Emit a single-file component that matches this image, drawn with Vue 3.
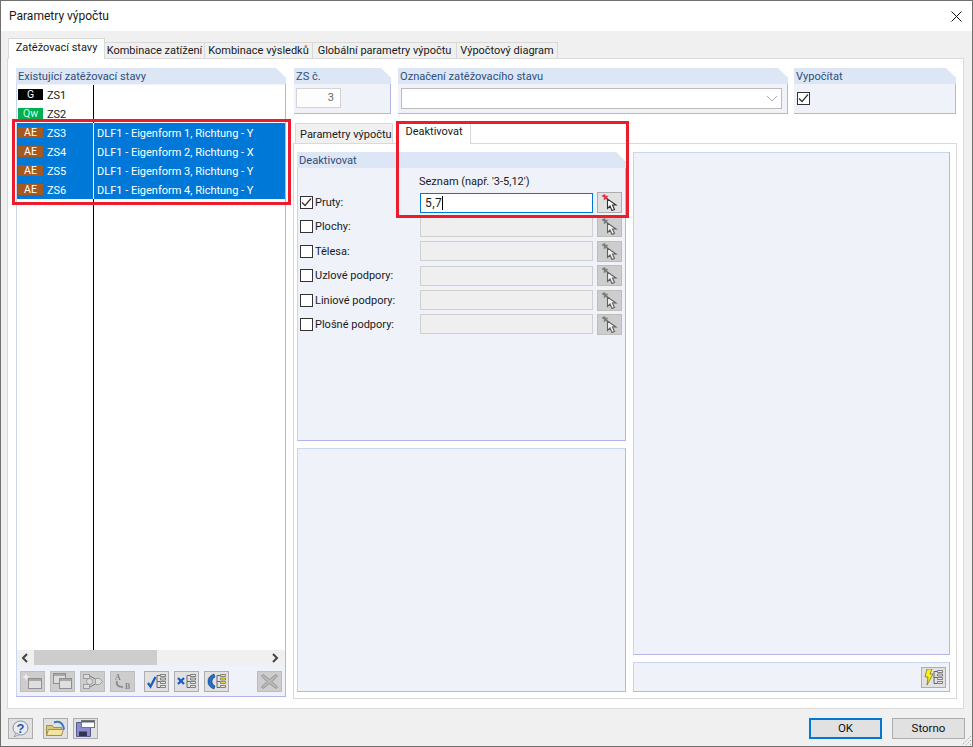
<template>
  <div class="window">
    <!-- sdílené ikony -->
    <svg class="defs" width="0" height="0">
      <symbol id="i-pick" viewBox="0 0 21 17">
        <path d="M5.500 0l1.500 2L9.500 1.500 8 3.500l1 2.500-2.500-1L4.500 6.500 5 3.500 2.500 2z" fill="#e0364a" />
        <path d="M8.500 5v9.500l2.500-2.500 2 4.500 2.500-1-2-4.500h3.500z" fill="#fff" stroke="#333" stroke-width="1.100" />
      </symbol>
      <symbol id="i-new" viewBox="0 0 21 17">
        <rect x="6.500" y="5.500" width="13" height="10" fill="#e8e8dc" stroke="#777" />
        <rect x="7" y="6" width="12" height="2" fill="#999" />
        <path d="M4 0l1 3 3 1-3 1-1 3-1-3-3-1 3-1z" fill="#fff" />
      </symbol>
      <symbol id="i-copy" viewBox="0 0 21 17">
        <rect x="1.500" y=".5" width="12" height="10" fill="#e4e4e4" stroke="#777" />
        <rect x="2" y="1" width="11" height="2" fill="#999" />
        <rect x="7.500" y="5.500" width="12" height="10" fill="#e8e8dc" stroke="#777" />
        <rect x="8" y="6" width="11" height="2" fill="#999" />
      </symbol>
      <symbol id="i-flow" viewBox="0 0 21 17">
        <rect x="1.500" y="1.500" width="6" height="4" fill="#e4e4e4" stroke="#888" />
        <rect x="1.500" y="11.500" width="6" height="4" fill="#e4e4e4" stroke="#888" />
        <circle cx="7.500" cy="8.500" r="3" fill="#e4e4e4" stroke="#888" />
        <path d="M13.500 5.500h4l3 3-3 3h-4z" fill="#e4e4e4" stroke="#888" />
        <path d="M8 3l5 3M8 14l5-3" stroke="#555" fill="none" />
      </symbol>
      <symbol id="i-check" viewBox="0 0 21 17">
        <path d="M2 10l2.500 3.500L9.500 4" stroke="#1d5fc4" stroke-width="2.400" fill="none" />
        <path d="M11 2.500v12M11 2.500h3M11 8.500h3M11 14.500h3" stroke="#666" fill="none" />
        <path d="M14.500 1.500h5v2h-5zM14.500 5h5v2h-5zM14.500 8.500h5v2h-5zM14.500 12.500h5v2h-5z" fill="#e8e8e8" stroke="#666" stroke-width=".8" />
      </symbol>
      <symbol id="i-cross" viewBox="0 0 21 17">
        <path d="M2 5l6 6M8 5l-6 6" stroke="#1d5fc4" stroke-width="2.400" fill="none" />
        <path d="M11 2.500v12M11 2.500h3M11 8.500h3M11 14.500h3" stroke="#666" fill="none" />
        <path d="M14.500 1.500h5v2h-5zM14.500 5h5v2h-5zM14.500 8.500h5v2h-5zM14.500 12.500h5v2h-5z" fill="#e8e8e8" stroke="#666" stroke-width=".8" />
      </symbol>
      <symbol id="i-swap" viewBox="0 0 21 17">
        <path d="M8 1C3 3 2 6 2 8.500s1 5.500 6 7.500l1-3C7 12 6 10 6 8.500S7 5 9 4z" fill="#1f6fd0" stroke="#124" stroke-width=".5" />
        <path d="M11 2.500v12M11 2.500h3M11 8.500h3M11 14.500h3" stroke="#666" fill="none" />
        <path d="M14.500 1.500h5v2h-5zM14.500 5h5v2h-5zM14.500 8.500h5v2h-5z" fill="#f5e52a" stroke="#777" stroke-width=".8" />
        <path d="M14.500 12.500h5v2h-5z" fill="#e8e8e8" stroke="#666" stroke-width=".8" />
      </symbol>
      <symbol id="i-del" viewBox="0 0 21 17">
        <path d="M4 1.500l6.500 5 6.500-5 1.500 1.500-5.500 5.500 5.500 5.500-1.500 1.500-6.500-5-6.500 5-1.500-1.500 5.500-5.500-5.500-5.500z" fill="#b4b4b4" stroke="#777" />
      </symbol>
      <symbol id="i-bolt" viewBox="0 0 21 17">
        <path d="M4 0h5L7 5h3l-6 11 1-8H2z" fill="#f6ee1e" stroke="#6a6a20" stroke-width=".7" />
        <path d="M11 2.500v12M11 2.500h3M11 8.500h3M11 14.500h3" stroke="#666" fill="none" />
        <path d="M14.500 1.500h5v2h-5zM14.500 5h5v2h-5zM14.500 8.500h5v2h-5zM14.500 12.500h5v2h-5z" fill="#e8e8e8" stroke="#666" stroke-width=".8" />
      </symbol>
      <symbol id="i-open" viewBox="0 0 21 17">
        <path d="M1.500 5.500h6l1 2h8v8h-15z" fill="#d8c87c" stroke="#a0924c" />
        <path d="M1.500 15.500l2-6h15l-2 6z" fill="#f0e4a0" stroke="#a0924c" />
        <path d="M9 2.500c5-2 9 0 10 7" stroke="#3f78c0" stroke-width="2" fill="none" />
      </symbol>
      <symbol id="i-save" viewBox="0 0 21 17">
        <path d="M1.500 2.500h14v14h-14z" fill="#8c8cd4" stroke="#555a88" />
        <rect x="4" y="11.500" width="8" height="4.500" fill="#33334e" />
        <rect x="6.500" y=".5" width="13" height="7" fill="#fff" stroke="#777" />
        <rect x="7" y="1" width="12" height="1.500" fill="#4a628c" />
      </symbol>
    </svg>

    <header class="titlebar">
      <span class="title">Parametry výpočtu</span>
      <svg class="close" width="11" height="11" viewBox="0 0 11 11">
        <path d="M.5.500l10 10M10.500.500l-10 10" stroke="#111" fill="none" />
      </svg>
    </header>

    <div class="body">
      <nav class="tabs">
        <div v-for="(t, i) in mainTabs" :key="t.label" class="tab" :class="{ active: i === 0 }" :style="{ width: t.width + 'px' }">{{ t.label }}</div>
      </nav>

      <section class="panel">
        <!-- levý sloupec -->
        <div class="left group">
          <div class="group-head">Existující zatěžovací stavy</div>
          <div class="list">
            <div v-for="r in rows" :key="r.name" class="row" :class="{ sel: r.desc }">
              <div class="c1">
                <span class="badge" :class="r.kind">{{ r.code }}</span>
                <span class="name">{{ r.name }}</span>
              </div>
              <div class="c2">{{ r.desc }}</div>
            </div>
            <div class="row fill"><div class="c1"></div></div>
          </div>
          <div class="scrollbar">
            <svg width="8" height="10" viewBox="0 0 8 10"><path d="M6 1L2 5l4 4" stroke="#444" stroke-width="2" fill="none" /></svg>
            <div class="track"><div class="thumb"></div></div>
            <svg width="8" height="10" viewBox="0 0 8 10"><path d="M2 1l4 4-4 4" stroke="#444" stroke-width="2" fill="none" /></svg>
          </div>
          <div class="toolbar">
            <div class="tool-set">
              <button v-for="n in ['new', 'copy', 'flow']" :key="n" class="ibtn off"><svg><use :href="'#i-' + n" /></svg></button>
              <button class="ibtn off">
                <svg viewBox="0 0 21 17">
                  <text x="3" y="7" class="ab-text">A</text>
                  <text x="13" y="16" class="ab-text">B</text>
                  <path d="M5 8c-1 4 1 6 6 6" stroke="#777" stroke-width="2" fill="none" />
                </svg>
              </button>
            </div>
            <div class="tool-set">
              <button v-for="n in ['check', 'cross', 'swap']" :key="n" class="ibtn"><svg><use :href="'#i-' + n" /></svg></button>
            </div>
            <button class="ibtn off last"><svg><use href="#i-del" /></svg></button>
          </div>
        </div>

        <!-- pravý sloupec -->
        <div class="right">
          <div class="top-row">
            <div class="group g-no">
              <div class="group-head">ZS č.</div>
              <div class="group-body"><div class="no-input">3</div></div>
            </div>
            <div class="group g-name">
              <div class="group-head">Označení zatěžovacího stavu</div>
              <div class="group-body">
                <div class="combo">
                  <svg width="12" height="7" viewBox="0 0 12 7"><path d="M1 1l5 5 5-5" stroke="#a8a8a8" fill="none" /></svg>
                </div>
              </div>
            </div>
            <div class="group g-calc">
              <div class="group-head">Vypočítat</div>
              <div class="group-body calc-body">
                <span class="cb checked"><svg width="11" height="11" viewBox="0 0 11 11"><path d="M1 5.500l3 3 6-7" stroke="#333" stroke-width="1.200" fill="none" /></svg></span>
              </div>
            </div>
          </div>

          <nav class="subtabs">
            <div class="subtab">Parametry výpočtu</div>
            <div class="subtab active">Deaktivovat</div>
          </nav>

          <div class="subpanel">
            <div class="sub-col col-a">
              <div class="group deact">
                <div class="group-head">Deaktivovat</div>
                <div class="list-hint">Seznam (např. '3-5,12')</div>
                <div class="form">
                  <div v-for="(f, i) in fields" :key="f" class="form-row">
                    <span class="cb" :class="{ checked: i === 0 }">
                      <svg v-if="i === 0" width="11" height="11" viewBox="0 0 11 11"><path d="M1 5.500l3 3 6-7" stroke="#333" stroke-width="1.200" fill="none" /></svg>
                    </span>
                    <label class="f-label">{{ f }}</label>
                    <div class="f-input" :class="{ focus: i === 0 }">
                      <template v-if="i === 0">5,7<span class="caret"></span></template>
                    </div>
                    <button class="ibtn pick" :class="{ off: i !== 0 }"><svg><use href="#i-pick" /></svg></button>
                  </div>
                </div>
              </div>
              <div class="box grow"></div>
            </div>
            <div class="sub-col col-b">
              <div class="box grow"></div>
              <div class="box strip">
                <button class="ibtn"><svg><use href="#i-bolt" /></svg></button>
              </div>
            </div>
          </div>
        </div>
      </section>

      <footer class="footer">
        <div class="foot-icons">
          <button class="ibtn help">
            <svg viewBox="0 0 21 17">
              <ellipse cx="10.500" cy="8" rx="7.500" ry="7" fill="#e8ecf2" stroke="#8a919c" />
              <path d="M6 13l-2 4 5-2.500z" fill="#e8ecf2" stroke="#8a919c" stroke-width=".8" />
              <text x="10.500" y="12.500" text-anchor="middle" class="help-text">?</text>
            </svg>
          </button>
          <button class="ibtn"><svg><use href="#i-open" /></svg></button>
          <button class="ibtn"><svg><use href="#i-save" /></svg></button>
        </div>
        <div class="foot-btns">
          <button class="btn primary">OK</button>
          <button class="btn">Storno</button>
        </div>
      </footer>
    </div>

    <svg class="grip" width="12" height="12" viewBox="0 0 12 12">
      <path d="M11 2L2 11M11 6l-5 5M11 10l-1 1" stroke="#a8a8a8" stroke-dasharray="1.500 1" fill="none" />
    </svg>

    <!-- červené zvýraznění přes obsah -->
    <div class="mark mark-a"></div>
    <div class="mark mark-b"></div>
  </div>
</template>

<script setup>
const mainTabs = [
  { label: 'Zatěžovací stavy', width: 97 },
  { label: 'Kombinace zatížení', width: 100 },
  { label: 'Kombinace výsledků', width: 108 },
  { label: 'Globální parametry výpočtu', width: 144 },
  { label: 'Výpočtový diagram', width: 101 },
]

const rows = [
  { code: 'G', kind: 'k-g', name: 'ZS1', desc: '' },
  { code: 'Qw', kind: 'k-q', name: 'ZS2', desc: '' },
  { code: 'AE', kind: 'k-a', name: 'ZS3', desc: 'DLF1 - Eigenform 1, Richtung - Y' },
  { code: 'AE', kind: 'k-a', name: 'ZS4', desc: 'DLF1 - Eigenform 2, Richtung - X' },
  { code: 'AE', kind: 'k-a', name: 'ZS5', desc: 'DLF1 - Eigenform 3, Richtung - Y' },
  { code: 'AE', kind: 'k-a', name: 'ZS6', desc: 'DLF1 - Eigenform 4, Richtung - Y' },
]

const fields = ['Pruty:', 'Plochy:', 'Tělesa:', 'Uzlové podpory:', 'Liniové podpory:', 'Plošné podpory:']
</script>

<style scoped>
.window {
  position: relative;
  width: 973px;
  height: 747px;
  box-sizing: border-box;
  border: 1px solid #707070;
  background: #f0f0f0;
  font-family: Roboto, "Noto Sans", sans-serif;
  font-size: 11px;
  color: #1a1a1a;
  overflow: hidden;
}

.defs {
  display: block;
  height: 0;
}

.ab-text {
  font-family: "Liberation Serif", serif;
  font-size: 8px;
  font-weight: 700;
  fill: #666;
}

.help-text {
  font-family: "Liberation Sans", sans-serif;
  font-size: 13px;
  font-weight: 700;
  fill: #2c5aa8;
}

.titlebar {
  height: 30px;
  background: #fff;
  display: flex;
  align-items: center;
  justify-content: space-between;
  padding: 0 10px 0 8px;
}

.title {
  font-size: 12px;
}

.body {
  padding: 7px 8px 0 6px;
}

.tabs {
  display: flex;
  align-items: flex-end;
  height: 21px;
  margin-left: 1px;
  position: relative;
  z-index: 1;
}

.tab {
  height: 16px;
  box-sizing: border-box;
  border: 1px solid #d9d9d9;
  border-left: 0;
  border-bottom: 0;
  background: #f0f0f0;
  text-align: center;
  line-height: 15px;
  white-space: nowrap;
  margin-bottom: 1px;
}

.tab.active {
  height: 21px;
  background: #fff;
  border-left: 1px solid #d9d9d9;
  line-height: 17px;
  margin-bottom: 0;
}

.panel {
  height: 651px;
  margin-top: -1px;
  box-sizing: border-box;
  border: 1px solid #d9d9d9;
  background: #fff;
  padding: 9px 7px 11px 8px;
  display: flex;
  gap: 8px;
}

.group {
  background: #eff3f9;
  box-sizing: border-box;
  border-right: 1px solid #b4b4e6;
  border-bottom: 1px solid #b4b4e6;
  clip-path: polygon(0 0, calc(100% - 10px) 0, 100% 10px, 100% 100%, 0 100%);
}

.group-head {
  height: 16px;
  margin-right: -1px;
  background: #dce6f4;
  color: #2f4f7c;
  font-size: 11.100px;
  line-height: 17px;
  padding-left: 2px;
  white-space: nowrap;
}

.left {
  width: 270px;
  display: flex;
  flex-direction: column;
  border-left: 1px solid #c9d6ec;
}

.left .group-head {
  margin-left: -1px;
  padding-left: 2px;
}

.list {
  flex: 1;
  margin-top: 1px;
  background: #fff;
  display: flex;
  flex-direction: column;
  min-height: 0;
}

.row {
  display: flex;
  height: 19px;
  line-height: 19px;
  flex: none;
}

.row.fill {
  flex: 1;
}

.c1 {
  width: 77px;
  flex: none;
  box-sizing: border-box;
  border-right: 1px solid #000;
  display: flex;
  align-items: center;
  gap: 4px;
  padding-left: 1px;
}

.name {
  padding-top: 2px;
}

.c2 {
  padding: 1px 0 0 3px;
  white-space: nowrap;
}

.row.sel {
  background: #0078d7;
  color: #fff;
}

.row.sel .c1 {
  border-right-color: #fff;
}

.badge {
  width: 25px;
  height: 11px;
  line-height: 11px;
  text-align: center;
  font-size: 10.500px;
  flex: none;
}

.k-g {
  background: #000;
  color: #fff;
}

.k-q {
  background: #00b050;
  color: #cfe;
}

.k-a {
  background: #a5581f;
  color: #fff;
}

.scrollbar {
  height: 16px;
  background: #f0f0f0;
  display: flex;
  align-items: center;
  padding: 0 6px 0 4px;
  gap: 4px;
  flex: none;
}

.track {
  flex: 1;
  height: 16px;
}

.thumb {
  width: 123px;
  height: 15px;
  margin-left: 1px;
  background: #cdcdcd;
}

.toolbar {
  height: 29px;
  margin-top: 1px;
  flex: none;
  display: flex;
  align-items: center;
  gap: 9px;
  padding-left: 3px;
}

.tool-set {
  display: flex;
  gap: 5px;
}

.ibtn {
  width: 25px;
  height: 21px;
  padding: 0;
  box-sizing: border-box;
  border: 1px solid #adadad;
  background: #e1e1e1;
  display: flex;
  align-items: center;
  justify-content: center;
  flex: none;
}

.ibtn svg {
  width: 21px;
  height: 17px;
}

.ibtn.off {
  background: #cdcdcd;
  border-color: #bdbdbd;
}

.ibtn.off svg {
  filter: grayscale(1);
  opacity: 0.7;
}

.last {
  margin-left: 19px;
}

.right {
  width: 662px;
  flex: none;
  display: flex;
  flex-direction: column;
}

.top-row {
  display: flex;
  height: 46px;
  gap: 7px;
  flex: none;
}

.g-no {
  width: 97px;
}

.g-name {
  width: 390px;
  margin-right: -1px;
}

.g-calc {
  width: 162px;
}

.group-body {
  padding: 4px 5px 0 2px;
}

.no-input {
  width: 45px;
  height: 20px;
  box-sizing: border-box;
  border: 1px solid #d4d4d4;
  background: #fdfdfd;
  color: #666;
  text-align: right;
  padding-right: 6px;
  line-height: 18px;
}

.combo {
  height: 21px;
  margin-left: 1px;
  box-sizing: border-box;
  border: 1px solid #bcbcbc;
  background: #fff;
  display: flex;
  align-items: center;
  justify-content: flex-end;
  padding-right: 3px;
}

.calc-body {
  padding-left: 3px;
  padding-top: 8px;
}

.cb {
  width: 13px;
  height: 13px;
  box-sizing: border-box;
  border: 1px solid #333;
  background: #fff;
  display: flex;
  align-items: center;
  justify-content: center;
  flex: none;
}

.subtabs {
  display: flex;
  align-items: flex-end;
  height: 22px;
  margin-top: 8px;
  margin-left: 1px;
  position: relative;
  z-index: 1;
  flex: none;
}

.subtab {
  width: 98px;
  height: 20px;
  box-sizing: border-box;
  border: 1px solid #d9d9d9;
  border-bottom: 0;
  background: #f0f0f0;
  padding-left: 4px;
  line-height: 21px;
  white-space: nowrap;
  margin-bottom: 1px;
}

.subtab.active {
  width: 74px;
  height: 22px;
  margin-left: 4px;
  margin-bottom: 0;
  padding-left: 0;
  text-align: center;
  background: #fff;
  line-height: 18px;
}

.subpanel {
  width: 664px;
  height: 556px;
  flex: none;
  margin: -1px 0 0 -1px;
  box-sizing: border-box;
  border: 1px solid #d9d9d9;
  padding: 8px 6px 6px 3px;
  display: flex;
  gap: 7px;
}

.sub-col {
  display: flex;
  flex-direction: column;
  gap: 7px;
}

.col-a {
  width: 329px;
}

.col-b {
  flex: 1;
}

.box {
  background: #eff3f9;
  box-sizing: border-box;
  border: 1px solid #c9d6ec;
  border-right-color: #b4b4e6;
  border-bottom-color: #b4b4e6;
}

.grow {
  flex: 1;
}

.strip {
  height: 30px;
  flex: none;
  display: flex;
  align-items: center;
  justify-content: flex-end;
  padding-right: 3px;
}

.deact {
  height: 289px;
  flex: none;
  border-left: 1px solid #c9d6ec;
}

.deact .group-head {
  margin-left: -1px;
}

.list-hint {
  height: 24px;
  padding-left: 121px;
  line-height: 27px;
  white-space: nowrap;
}

.form {
  display: flex;
  flex-direction: column;
  gap: 3.400px;
}

.form-row {
  display: flex;
  align-items: center;
  height: 21px;
  padding-left: 2px;
}

.f-label {
  width: 105px;
  margin-left: 2px;
  white-space: nowrap;
}

.f-input {
  width: 173px;
  height: 20px;
  box-sizing: border-box;
  border: 1px solid #cfcfcf;
  background: #efefef;
  display: flex;
  align-items: center;
  padding-left: 4px;
  font-size: 12px;
  letter-spacing: 0.5px;
}

.f-input.focus {
  border-color: #0078d7;
  background: #fff;
}

.caret {
  width: 1px;
  height: 14px;
  background: #000;
}

.pick {
  margin-left: 4px;
}

.footer {
  display: flex;
  justify-content: space-between;
  align-items: center;
  margin-top: 9px;
  margin-right: -1px;
  padding-left: 1px;
}

.foot-icons {
  display: flex;
  gap: 5px;
}

.help {
  margin-right: 5px;
}

.foot-btns {
  display: flex;
  gap: 10px;
}

.btn {
  width: 73px;
  height: 21px;
  box-sizing: border-box;
  border: 1px solid #adadad;
  background: #e1e1e1;
  font: inherit;
  font-size: 11.500px;
  color: #111;
  padding: 0;
  line-height: 17px;
}

.btn.primary {
  border: 2px solid #0078d7;
}

.grip {
  position: absolute;
  right: 0;
  bottom: 0;
}

.mark {
  position: absolute;
  box-sizing: border-box;
  border: 3px solid #ec1c2c;
  pointer-events: none;
  z-index: 2;
}

.mark-a {
  left: 11px;
  top: 118px;
  width: 279px;
  height: 86px;
}

.mark-b {
  left: 395px;
  top: 120px;
  width: 233px;
  height: 97px;
}
</style>
